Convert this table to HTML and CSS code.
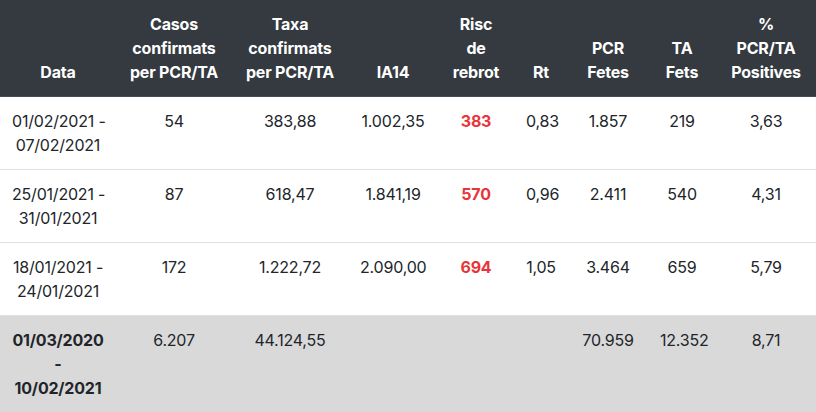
FILE: index.html
```html
<!DOCTYPE html>
<html lang="ca">
<head>
<meta charset="utf-8">
<title>Dades</title>
<link rel="stylesheet" href="styles.css">
</head>
<body>
<table class="data-table">
  <colgroup>
    <col class="c-data">
    <col class="c-casos">
    <col class="c-taxa">
    <col class="c-ia">
    <col class="c-risc">
    <col class="c-rt">
    <col class="c-pcr">
    <col class="c-ta">
    <col class="c-pos">
  </colgroup>
  <thead>
    <tr>
      <th>Data</th>
      <th>Casos confirmats per PCR/TA</th>
      <th>Taxa confirmats per PCR/TA</th>
      <th>IA14</th>
      <th>Risc de rebrot</th>
      <th>Rt</th>
      <th>PCR Fetes</th>
      <th>TA Fets</th>
      <th>% PCR/TA Positives</th>
    </tr>
  </thead>
  <tbody>
    <tr>
      <td><span class="nw">01/02/2021 -</span> <span class="nw">07/02/2021</span></td>
      <td>54</td>
      <td>383,88</td>
      <td>1.002,35</td>
      <td class="risk">383</td>
      <td>0,83</td>
      <td>1.857</td>
      <td>219</td>
      <td>3,63</td>
    </tr>
    <tr>
      <td><span class="nw">25/01/2021 -</span> <span class="nw">31/01/2021</span></td>
      <td>87</td>
      <td>618,47</td>
      <td>1.841,19</td>
      <td class="risk">570</td>
      <td>0,96</td>
      <td>2.411</td>
      <td>540</td>
      <td>4,31</td>
    </tr>
    <tr>
      <td><span class="nw">18/01/2021 -</span> <span class="nw">24/01/2021</span></td>
      <td>172</td>
      <td>1.222,72</td>
      <td>2.090,00</td>
      <td class="risk">694</td>
      <td>1,05</td>
      <td>3.464</td>
      <td>659</td>
      <td>5,79</td>
    </tr>
    <tr class="total">
      <td class="total-date"><span class="nw">01/03/2020</span> <span class="nw">-</span> <span class="nw">10/02/2021</span></td>
      <td>6.207</td>
      <td>44.124,55</td>
      <td></td>
      <td></td>
      <td></td>
      <td>70.959</td>
      <td>12.352</td>
      <td>8,71</td>
    </tr>
  </tbody>
</table>
</body>
</html>
```

FILE: styles.css
```css
html, body {
  margin: 0;
  padding: 0;
  background: #ffffff;
}

body {
  font-family: Inter, "Noto Sans", "Liberation Sans", sans-serif;
  font-size: 16px;
  line-height: 24px;
  color: #212529;
}

.data-table {
  width: 816px;
  border-collapse: collapse;
  table-layout: fixed;
}

.c-data { width: 116px; }
.c-casos { width: 116px; }
.c-taxa { width: 116px; }
.c-ia { width: 90px; }
.c-risc { width: 76px; }
.c-rt { width: 54px; }
.c-pcr { width: 80px; }
.c-ta { width: 68px; }
.c-pos { width: 100px; }

.data-table th {
  background: #343a40;
  color: #ffffff;
  font-weight: 700;
  padding: 12px;
  text-align: center;
  vertical-align: bottom;
  border-bottom: 1px solid #454d55;
  letter-spacing: -0.2px;
}

.data-table td {
  padding: 12px;
  text-align: center;
  vertical-align: top;
  border-bottom: 1px solid #dee2e6;
  letter-spacing: -0.2px;
}

.nw {
  white-space: nowrap;
}

.data-table .risk {
  color: #e8343a;
  font-weight: 700;
}

.data-table .total td {
  background: #d9d9d9;
  border-bottom: none;
}

.data-table .total-date {
  font-weight: 700;
}
```
